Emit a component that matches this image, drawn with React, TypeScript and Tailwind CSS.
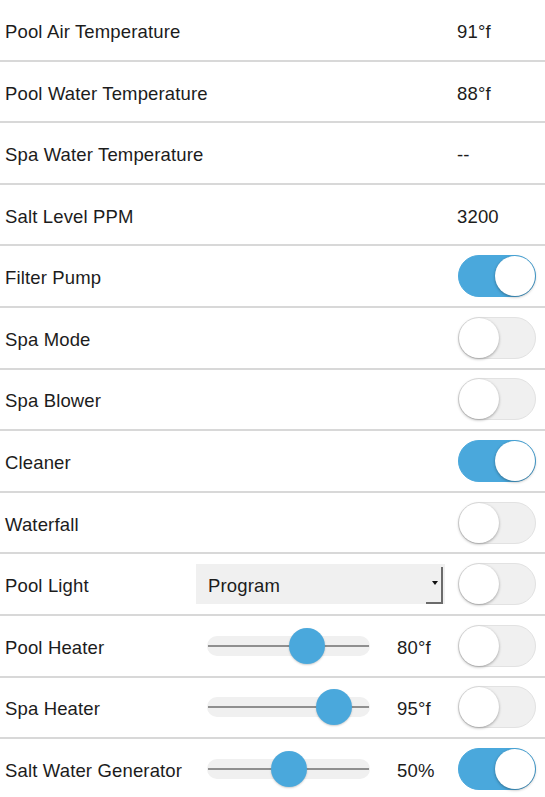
import React from 'react';

type Row =
  | { kind: 'value'; label: string; value: string }
  | { kind: 'toggle'; label: string; on: boolean }
  | { kind: 'select'; label: string; option: string; on: boolean }
  | { kind: 'slider'; label: string; thumb: number; value: string; on: boolean };

const rows: Row[] = [
  { kind: 'value', label: 'Pool Air Temperature', value: '91°f' },
  { kind: 'value', label: 'Pool Water Temperature', value: '88°f' },
  { kind: 'value', label: 'Spa Water Temperature', value: '--' },
  { kind: 'value', label: 'Salt Level PPM', value: '3200' },
  { kind: 'toggle', label: 'Filter Pump', on: true },
  { kind: 'toggle', label: 'Spa Mode', on: false },
  { kind: 'toggle', label: 'Spa Blower', on: false },
  { kind: 'toggle', label: 'Cleaner', on: true },
  { kind: 'toggle', label: 'Waterfall', on: false },
  { kind: 'select', label: 'Pool Light', option: 'Program', on: false },
  { kind: 'slider', label: 'Pool Heater', thumb: 82, value: '80°f', on: false },
  { kind: 'slider', label: 'Spa Heater', thumb: 109, value: '95°f', on: false },
  { kind: 'slider', label: 'Salt Water Generator', thumb: 64, value: '50%', on: true },
];

const Toggle: React.FC<{ on: boolean }> = ({ on }) => (
  <div
    className={`flex h-[42px] w-[78px] items-center rounded-full border ${
      on ? 'justify-end border-[#4aa8dc] bg-[#4aa8dc]' : 'justify-start border-[#e2e2e2] bg-[#f0f0f0]'
    }`}
  >
    <div className="h-[40px] w-[40px] rounded-full bg-white shadow-[0_1px_3px_rgba(0,0,0,0.35)]" />
  </div>
);

const Slider: React.FC<{ thumb: number }> = ({ thumb }) => (
  <div className="relative flex h-[20px] w-[163px] items-center rounded-full bg-[#f0f0f0]">
    <div className="mx-[1px] h-[2px] w-full bg-[#8f8f8f]" />
    <div
      className="absolute top-[-8px] h-[36px] w-[36px] rounded-full bg-[#4aa8dc] shadow-[0_1px_2px_rgba(0,0,0,0.2)]"
      style={{ left: thumb }}
    />
  </div>
);

const Select: React.FC<{ option: string }> = ({ option }) => (
  <div className="relative flex h-[40px] w-[249px] items-center bg-[#f0f0f0] pl-[12px]">
    <span className="pt-[3px]">{option}</span>
    <span className="absolute right-[7px] top-[17px] h-0 w-0 border-x-[3px] border-t-[4px] border-x-transparent border-t-[#111]" />
    <span className="absolute bottom-0 right-[2px] h-[37px] w-[17px] border-b-[2px] border-r-[2px] border-[#6b6b6b]" />
  </div>
);

export default function App() {
  return (
    <div className="h-[797px] w-[545px] overflow-hidden bg-white text-[18.5px] tracking-[0.15px] text-[#1c1c1c] [font-family:'Liberation_Sans',Arial,sans-serif]">
      {rows.map((row) => (
        <div
          key={row.label}
          className="flex h-[61.6px] items-center border-b-2 border-[#d8d8d8] pl-[5px]"
        >
          {row.kind === 'value' && (
            <>
              <span className="flex-1 pt-[4px]">{row.label}</span>
              <span className="w-[88px] pt-[4px]">{row.value}</span>
            </>
          )}
          {row.kind === 'toggle' && (
            <>
              <span className="flex-1 pt-[4px]">{row.label}</span>
              <div className="w-[87px]">
                <Toggle on={row.on} />
              </div>
            </>
          )}
          {row.kind === 'select' && (
            <>
              <span className="w-[191px] pt-[4px]">{row.label}</span>
              <Select option={row.option} />
              <div className="ml-[13px]">
                <Toggle on={row.on} />
              </div>
            </>
          )}
          {row.kind === 'slider' && (
            <>
              <span className="w-[202px] pt-[4px]">{row.label}</span>
              <Slider thumb={row.thumb} />
              <span className="ml-[27px] w-[61px] pt-[4px]">{row.value}</span>
              <Toggle on={row.on} />
            </>
          )}
        </div>
      ))}
    </div>
  );
}
